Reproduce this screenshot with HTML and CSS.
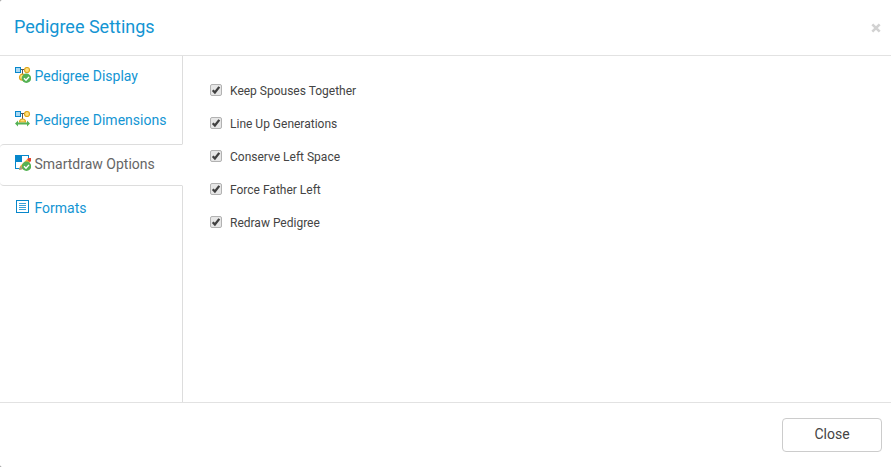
FILE: index.html
```html
<!DOCTYPE html>
<html lang="en">
<head>
<meta charset="utf-8">
<title>Pedigree Settings</title>
<link rel="stylesheet" href="styles.css">
</head>
<body>
<div class="modal">
  <header class="header">
    <h1 class="title">Pedigree Settings</h1>
    <button class="dismiss" aria-label="Close dialog"><svg width="10" height="10" viewBox="0 0 10 10"><path d="M1.3 1.3l7.4 7.4M8.7 1.3L1.3 8.7" stroke="#d2d2d2" stroke-width="2.6"/></svg></button>
  </header>
  <div class="body">
    <nav class="tabs">
      <a class="tab"><svg class="icon" viewBox="0 0 16 16">
        <path d="M6 2.5h4M7.5 3v6" stroke="#555" fill="none"/>
        <rect x=".5" y=".5" width="5" height="5" fill="#a8d8f3" stroke="#0787cb"/>
        <circle cx="12" cy="3" r="2.5" fill="#ffe17c" stroke="#dfa51c" stroke-width="1.2"/>
        <circle cx="7.5" cy="10.2" r="3" fill="#ffe17c" stroke="#dfa51c" stroke-width="1.2"/>
        <circle cx="11.4" cy="11.3" r="4.7" fill="#55b254"/>
        <path d="M9 11.2l2 2 3-3.3" fill="none" stroke="#fff" stroke-width="1.4"/>
      </svg><span>Pedigree Display</span></a>
      <a class="tab"><svg class="icon" viewBox="0 0 16 16">
        <path d="M6 2.5h4M7.5 3v5" stroke="#555" fill="none"/>
        <rect x=".5" y=".5" width="5" height="5" fill="#a8d8f3" stroke="#0787cb"/>
        <circle cx="12" cy="3" r="2.5" fill="#ffe17c" stroke="#dfa51c" stroke-width="1.2"/>
        <path d="M4.5 11a3 3 0 0 1 6 0z" fill="#ffe17c" stroke="#dfa51c" stroke-width="1.2"/>
        <path d="M0 12.5L3 9.5V11.5h9v-2l3 3-3 3v-2H3v2z" fill="#55b254"/>
      </svg><span>Pedigree Dimensions</span></a>
      <a class="tab tab-active"><svg class="icon" viewBox="0 0 16 16">
        <rect x=".5" y=".5" width="13" height="13" fill="#fff" stroke="#0787cb"/>
        <path d="M0 0h7v7H0z" fill="#0787cb"/>
        <path d="M4 15l1.2-4L12 4.2l3 3L8 14z" fill="#fbb03b"/>
        <path d="M4 15l1.2-4 2.8 3z" fill="#a59a86"/>
        <path d="M12 4.2L13.3 3H16v3l-1.2 1.2z" fill="#e5452e"/>
        <circle cx="11.5" cy="11.3" r="4.7" fill="#55b254"/>
        <path d="M9 11.2l2 2 3-3.3" fill="none" stroke="#fff" stroke-width="1.4"/>
      </svg><span>Smartdraw Options</span></a>
      <a class="tab"><svg class="icon" viewBox="0 0 16 16">
        <rect x="1.5" y="1.5" width="12" height="12" fill="#fff" stroke="#0787cb"/>
        <path d="M4 4.5h7M4 6.5h7M4 8.5h7M4 10.5h7" stroke="#0787cb" stroke-width=".8"/>
      </svg><span>Formats</span></a>
    </nav>
    <main class="options">
      <label class="option"><svg class="check" viewBox="0 0 12 12"><use href="#check"/></svg><span>Keep Spouses Together</span></label>
      <label class="option"><svg class="check" viewBox="0 0 12 12"><use href="#check"/></svg><span>Line Up Generations</span></label>
      <label class="option"><svg class="check" viewBox="0 0 12 12"><use href="#check"/></svg><span>Conserve Left Space</span></label>
      <label class="option"><svg class="check" viewBox="0 0 12 12"><use href="#check"/></svg><span>Force Father Left</span></label>
      <label class="option"><svg class="check" viewBox="0 0 12 12"><use href="#check"/></svg><span>Redraw Pedigree</span></label>
    </main>
  </div>
  <footer class="footer"><button class="close">Close</button></footer>
</div>
<svg class="defs"><defs><g id="check">
  <rect x=".5" y=".5" width="11" height="11" rx="1.5" fill="#e6e6e6" stroke="#b2b2b2"/>
  <path d="M2.7 6.2l2.2 2.3 4.4-5.6" fill="none" stroke="#404040" stroke-width="2.3"/>
</g></defs></svg>
</body>
</html>
```
FILE: styles.css
```css
* { box-sizing: border-box; }
body {
  margin: 0;
  background: #888;
  font-family: Roboto, "Liberation Sans", sans-serif;
  overflow: hidden;
}
.modal {
  display: flex;
  flex-direction: column;
  height: 467px;
  background: #fff;
  border-radius: 2px 0 0 2px;
}
.header {
  display: flex;
  align-items: center;
  justify-content: space-between;
  height: 56px;
  padding: 0 10px 2px 14px;
  border-bottom: 1px solid #e2e2e2;
}
.title {
  margin: 0;
  font-size: 18px;
  font-weight: 400;
  color: #1395d3;
}
.dismiss {
  display: flex;
  margin-top: 3px;
  padding: 0;
  border: 0;
  background: none;
}
.body { display: flex; flex: 1; }
.tabs {
  display: flex;
  flex-direction: column;
  gap: 2px;
  width: 183px;
  background: linear-gradient(#ddd, #ddd) right / 1px 100% no-repeat;
}
.tab {
  display: flex;
  align-items: center;
  gap: 3.5px;
  height: 42px;
  padding: 0 0 2px 15px;
  border: 1px solid transparent;
  border-left: 0;
  font-size: 14px;
  color: #1395d3;
}
.tab-active {
  background: #fff;
  border-color: #ddd;
  border-right-color: #fff;
  border-radius: 4px 0 0 4px;
  color: #666;
}
.icon { width: 16px; height: 16px; margin-top: -3px; }
.options {
  display: flex;
  flex-direction: column;
  gap: 13px;
  padding: 24px 27px;
}
.option {
  display: flex;
  align-items: center;
  gap: 8px;
  height: 20px;
  font-size: 12px;
  color: #444;
}
.option span { padding-top: 2px; }
.check { width: 12px; height: 12px; }
.footer {
  display: flex;
  justify-content: flex-end;
  height: 65px;
  padding: 15px 9px;
  border-top: 1px solid #e2e2e2;
}
.close {
  width: 100px;
  height: 34px;
  padding: 0 0 2px;
  border: 1px solid #ccc;
  border-radius: 4px;
  background: #fff;
  font: 14px Roboto, sans-serif;
  color: #444;
}
.defs { display: none; }
```
